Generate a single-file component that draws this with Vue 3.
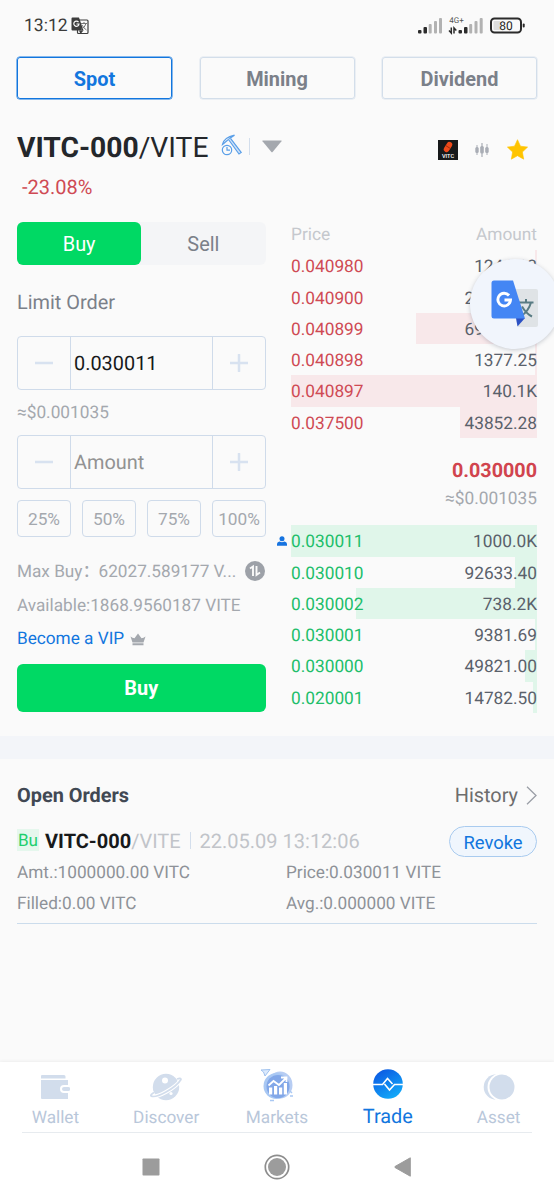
<script setup>
const tabs = ['Spot', 'Mining', 'Dividend']
const percents = ['25%', '50%', '75%', '100%']
const asks = [
  { price: '0.040980', amount: '1241.13', bar: 2 },
  { price: '0.040900', amount: '21500.00', bar: 0.5 },
  { price: '0.040899', amount: '69102.40', bar: 121.5 },
  { price: '0.040898', amount: '1377.25', bar: 2 },
  { price: '0.040897', amount: '140.1K', bar: 246 },
  { price: '0.037500', amount: '43852.28', bar: 77 },
]
const bids = [
  { price: '0.030011', amount: '1000.0K', bar: 246, mine: true },
  { price: '0.030010', amount: '92633.40', bar: 22.5 },
  { price: '0.030002', amount: '738.2K', bar: 181.5 },
  { price: '0.030001', amount: '9381.69', bar: 2 },
  { price: '0.030000', amount: '49821.00', bar: 12 },
  { price: '0.020001', amount: '14782.50', bar: 4 },
]
</script>

<template>
  <div class="screen">
    <header class="status">
      <span class="clock">13:12</span>
      <svg class="st-translate" width="18" height="18" viewBox="0 0 18 18">
        <rect x="6.5" y="3" width="10.5" height="13.5" rx="1" fill="none" stroke="#3d3d3d" stroke-width="1.2" />
        <path d="M1 .5h7l4.500 13H1.500Q.5 13.500.5 12.500V1.500Q.5.5 1.500.5z" fill="#3d3d3d" />
        <path d="M7.500 5.200A2.600 2.600 0 1 0 8 7H5.500" fill="none" stroke="#fafafa" stroke-width="1.200" />
        <path d="M10 6.500h6M13 5v1.500M15 6.500q-1 4-5 6M11 8q1.500 3 4.500 5" fill="none" stroke="#777" stroke-width="1" />
        <path d="M8 13.500h4.500L9.500 17z" fill="#3d3d3d" />
      </svg>
      <svg class="signals" width="110" height="20" viewBox="0 0 110 20">
        <g fill="#2b2b2b">
          <rect x="1" y="13" width="3.500" height="3.500" rx="1" /><rect x="6.500" y="10" width="3.500" height="6.500" rx="1" />
          <rect x="41.500" y="13" width="3.500" height="3.500" rx="1" /><rect x="47" y="10" width="3.500" height="6.500" rx="1" />
        </g>
        <g fill="#b2b2b2">
          <rect x="11.700" y="7" width="3" height="9.500" rx="1" /><rect x="17" y="4" width="3" height="12.500" rx="1" /><rect x="22" y="1" width="3" height="15.500" rx="1" />
          <rect x="52.200" y="7" width="3" height="9.500" rx="1" /><rect x="57.500" y="4" width="3" height="12.500" rx="1" /><rect x="62.700" y="1" width="3" height="15.500" rx="1" />
        </g>
        <path d="M34.300 10.500v5.500l-2.300-2.500M37 16.500v-5.500l2.300 2.500" stroke="#2b2b2b" stroke-width="1.500" fill="none" />
        <text x="32.300" y="5.800" font-size="8" fill="#555" font-family="Roboto, sans-serif">4G+</text>
        <rect x="74" y="1.500" width="30" height="14" rx="3.500" fill="#fafafa" stroke="#2b2b2b" stroke-width="2" />
        <rect x="76.500" y="4" width="7" height="9" rx="1" fill="#ddd" />
        <rect x="105.700" y="6.500" width="2" height="4" rx="1" fill="#2b2b2b" />
        <text x="89" y="13" font-size="12" text-anchor="middle" fill="#222" font-family="Roboto, sans-serif">80</text>
      </svg>
    </header>

    <nav class="tabs">
      <button v-for="(t, i) in tabs" :key="t" :class="['tab', { on: i === 0 }]">{{ t }}</button>
    </nav>

    <section class="pair">
      <h1><b>VITC-000</b><span>/VITE</span></h1>
      <svg class="pick" width="22" height="22" viewBox="0 0 22 22" fill="none" stroke="#5a9fe8" stroke-width="1.200">
        <path d="M1.500 10.500Q3 3.500 13.500 1.200Q8.500 4.300 6.800 6Q4.500 8 1.500 10.500z" />
        <path d="M7.500 5.500l10.500 14.500 2.200-1.600L9.500 4.300" fill="#cfe2f8" />
        <circle cx="6" cy="16" r="4.700" fill="#fafafa" /><path d="M6 13v3.200h3" />
      </svg>
      <i class="bar"></i>
      <svg class="caret" width="20" height="13" viewBox="0 0 20 13"><path d="M.8.5h18.400q.8 0 .3.700L10.600 11.900q-.6.700-1.200 0L.5 1.200Q0 .5.800.5z" fill="#a4a8ae" /></svg>
      <div class="actions">
        <svg width="20" height="20" viewBox="0 0 20 20">
          <rect width="20" height="20" fill="#17191a" />
          <g transform="rotate(32 10 7)"><rect x="7.200" y="1.500" width="5.600" height="11" rx="2.800" fill="#ee4a1a" /><path d="M7.200 7h5.600" stroke="#8e2508" stroke-width=".7" /></g>
          <text x="10" y="17.800" font-size="5.600" text-anchor="middle" fill="#fff" font-family="Roboto, sans-serif" font-weight="500">VITC</text>
        </svg>
        <svg width="14" height="16" viewBox="0 0 14 16" fill="#a9adb5">
          <path d="M1.500 3h1v10h-1zM6.400 1h1.200v14H6.400zM11.500 2h1v11h-1z" />
          <rect x=".3" y="5" width="3.400" height="6" rx="1.500" /><rect x="5.200" y="4" width="3.600" height="7.500" rx="1.500" /><rect x="10.200" y="5" width="3.500" height="6" rx="1.500" />
        </svg>
        <svg width="21" height="21" viewBox="0 0 21 21"><path d="M10.500.7l3 6.500 7.100.9-5.200 4.900 1.300 7.200-6.200-3.500-6.200 3.500L5.600 13 .4 8.100l7.100-.9z" fill="#ffc400" stroke="#ffc400" stroke-width=".6" stroke-linejoin="round" /></svg>
      </div>
    </section>
    <div class="change">-23.08%</div>

    <main class="trade">
      <section class="form">
        <div class="side"><button class="buy">Buy</button><button class="sell">Sell</button></div>
        <div class="kind">Limit Order</div>
        <div class="stepper">
          <span class="cell"><svg width="18" height="18" viewBox="0 0 18 18"><path d="M.5 9h17" /></svg></span>
          <span class="value">0.030011</span>
          <span class="cell"><svg width="18" height="18" viewBox="0 0 18 18"><path d="M.5 9h17M9 .7v16.600" /></svg></span>
        </div>
        <div class="approx">≈$0.001035</div>
        <div class="stepper">
          <span class="cell"><svg width="18" height="18" viewBox="0 0 18 18"><path d="M.5 9h17" /></svg></span>
          <span class="value hint">Amount</span>
          <span class="cell"><svg width="18" height="18" viewBox="0 0 18 18"><path d="M.5 9h17M9 .7v16.600" /></svg></span>
        </div>
        <div class="percents"><button v-for="p in percents" :key="p">{{ p }}</button></div>
        <div class="info max">
          <span class="mb">Max Buy<span class="colon">：</span></span><span class="num">62027.589177 V...</span>
          <svg width="20" height="20" viewBox="0 0 20 20"><circle cx="10" cy="10" r="10" fill="#9da1a8" /><path d="M5 7.500L8 5.500V15M11.500 5v9l3.500-2.500" fill="none" stroke="#fafafa" stroke-width="1.900" /></svg>
        </div>
        <div class="info avail">Available:1868.9560187 VITE</div>
        <div class="info vip">Become a VIP
          <svg width="16" height="13" viewBox="0 0 16 13" fill="#a4a8ae"><path d="M.5 3.500Q2.500 5 4.500 5.300L8 .5l3.500 4.800q2-.3 4-1.800-1 3-2 6h-11Q1.500 6.500.5 3.500zM2.500 10.300h11v1.900h-11z" /></svg>
        </div>
        <button class="submit">Buy</button>
      </section>

      <section class="book">
        <div class="head"><span>Price</span><span>Amount</span></div>
        <div v-for="r in asks" :key="r.price" class="row ask">
          <i class="depth" :style="{ width: r.bar + 'px' }"></i><span class="price">{{ r.price }}</span><span class="amt">{{ r.amount }}</span>
        </div>
        <div class="last">0.030000</div>
        <div class="last-usd">≈$0.001035</div>
        <div v-for="r in bids" :key="r.price" class="row bid">
          <i class="depth" :style="{ width: r.bar + 'px' }"></i>
          <svg v-if="r.mine" class="mine" width="10" height="10" viewBox="0 0 10 10" fill="#1673e0"><circle cx="5" cy="2.700" r="2.500" /><path d="M0 9.800V8q0-2 2.300-2.500L5 6.200l2.700-.7Q10 6 10 8v1.800z" /></svg>
          <span class="price">{{ r.price }}</span><span class="amt">{{ r.amount }}</span>
        </div>
      </section>
    </main>

    <div class="band"></div>

    <section class="orders">
      <div class="oh">
        <h2>Open Orders</h2>
        <span class="history">History</span>
        <svg width="11" height="19" viewBox="0 0 11 19"><path d="M1 .8l9 8.700-9 8.700" fill="none" stroke="#9a9ea6" stroke-width="1.300" /></svg>
      </div>
      <div class="ot">
        <span class="tag">Bu</span><b>VITC-000</b><span class="quote">/VITE</span><i></i><span class="time">22.05.09 13:12:06</span>
        <button>Revoke</button>
      </div>
      <div class="details"><span>Amt.:1000000.00 VITC</span><span>Price:0.030011 VITE</span><span>Filled:0.00 VITC</span><span>Avg.:0.000000 VITE</span></div>
    </section>

    <footer>
      <nav class="bottom">
        <div class="item">
          <svg width="30" height="28" viewBox="0 0 30 28" fill="#d2ddec"><path d="M1 3q0-1 1-1h22q1.500 0 1.500 1.500V5.500H1zM1 7h27v5h-4q-4 0-4 4t4 4h4v6H2q-1 0-1-1z" /><rect x="22" y="14" width="8.300" height="4" rx="2" /></svg>
          <span>Wallet</span>
        </div>
        <div class="item">
          <svg width="34" height="28" viewBox="0 0 34 28"><circle cx="17" cy="14" r="13.200" fill="#d2ddec" /><circle cx="16" cy="7.500" r="3" fill="#fff" /><circle cx="22" cy="20.500" r="1.600" fill="#fff" /><path d="M5 19.500q-4 2.500-3 3.500 4 2 15-4t15-12.500q0-2-4-.5" fill="none" stroke="#fff" stroke-width="4" /><path d="M5 19.500q-4 2.500-3 3.500 4 2 15-4t15-12.500q0-2-4-.5" fill="none" stroke="#d2ddec" stroke-width="1.700" /></svg>
          <span>Discover</span>
        </div>
        <div class="item">
          <svg class="mk" width="34" height="34" viewBox="0 0 34 34"><ellipse cx="20" cy="16" rx="12.500" ry="13.500" fill="#b7cdf3" /><circle cx="16.500" cy="17" r="13" fill="#a9c8f3" /><circle cx="18" cy="17.500" r="11.500" fill="#82a7e8" /><path d="M1 1l9-.5-5 6.500-1.500-4z" fill="#dceafd" stroke="#9fc1ee" /><path d="M9 18.500h3.200v7H9zM14 17h3.200v8.500H14zM19 18.500h3.200v7H19zM23.800 14H27v11.500h-3.200z" fill="#fff" /><path d="M8.500 16.500l5-4.500 5.500 4 7-7M21 8.500h5.500v4.500" fill="none" stroke="#fff" stroke-width="1.800" /><path d="M10 31.500h4M30 22l2 2M30 27h3" stroke="#a9c8f3" stroke-width="1.400" /></svg>
          <span>Markets</span>
        </div>
        <div class="item active">
          <svg width="30" height="30" viewBox="0 0 30 30"><defs><linearGradient id="tg" x1="0" y1="0" x2=".6" y2="1"><stop offset="0" stop-color="#0b50e0" /><stop offset="1" stop-color="#12a7f8" /></linearGradient></defs><circle cx="15" cy="15" r="14.800" fill="url(#tg)" /><path d="M0 15.500h9.500L14.500 9.500l5 5.500M11.500 15l5 6 5-5.500H30" fill="none" stroke="#fff" stroke-width="1.600" /></svg>
          <span>Trade</span>
        </div>
        <div class="item">
          <svg width="32" height="28" viewBox="0 0 32 28" fill="#d2ddec"><circle cx="13.500" cy="14" r="12.800" /><circle cx="18.800" cy="14" r="14.300" fill="#fff" /><circle cx="19" cy="14" r="12.500" /></svg>
          <span>Asset</span>
        </div>
      </nav>
      <div class="system">
        <svg width="18" height="18" viewBox="0 0 18 18"><rect x=".5" y=".5" width="17" height="17" rx=".8" fill="#9c9c9c" /></svg>
        <svg width="26" height="26" viewBox="0 0 26 26"><circle cx="13" cy="13" r="11.700" fill="none" stroke="#8d8d8d" stroke-width="1.700" /><circle cx="13" cy="13" r="9" fill="#9c9c9c" /></svg>
        <svg width="18" height="20" viewBox="0 0 18 20"><path d="M16.300.8v18.400L1 10.500q-.8-.5 0-1z" fill="#9c9c9c" stroke="#9c9c9c" stroke-linejoin="round" /></svg>
      </div>
    </footer>

    <div class="bubble">
      <svg width="48" height="48" viewBox="0 0 48 48">
        <path d="M18 9h27q2 0 2 2v34q0 2-2 2H27z" fill="#dfe3e6" />
        <path d="M27 22.500h15.500M35 19v3.500M40 22.500q-2.500 9-10.500 14M31 26.500q4 7 10 10" fill="none" stroke="#587b83" stroke-width="2" />
        <path d="M25 38h9l-7.500 8.500z" fill="#2c51c4" />
        <path d="M3 .5h19L34 38.500H3q-2.500 0-2.500-2.500V3Q.5.500 3 .5z" fill="#4486f4" />
        <path d="M18 15.500A6.300 6.300 0 1 0 19.500 20H13.500" fill="none" stroke="#fff" stroke-width="2.900" />
      </svg>
    </div>
  </div>
</template>

<style scoped>
* { box-sizing: border-box; }
.screen { position: relative; width: 554px; height: 1200px; background: #fafafa; font-family: Roboto, "Noto Sans CJK SC", sans-serif; text-rendering: geometricPrecision; color: #24272b; overflow: hidden; display: flex; flex-direction: column; }
svg { display: block; flex: none; }
button { font: inherit; color: inherit; background: none; border: 0; padding: 0; margin: 0; }
.status { height: 57px; padding: 16px 27px 0 24px; display: flex; align-items: flex-start; }
.clock { font-size: 17.500px; line-height: 20px; width: 44px; color: #3b3b3b; }
.st-translate { margin: 1px 0 0 3px; }
.signals { margin: 1px 0 0 auto; overflow: visible; }
.tabs { display: flex; justify-content: space-between; padding: 0 17px; height: 42px; }
.tab { width: 155px; height: 42px; border: 1px solid #d3deea; box-shadow: 0 0 0 .5px #dbe3ee; border-radius: 3px; font-size: 19.900px; line-height: 44px; font-weight: 700; color: #7b8089; }
.tab.on { border-color: #1276de; box-shadow: 0 0 0 .5px #1276de; color: #1276de; }
.pair { height: 72px; padding: 30px 26px 0 17px; display: flex; align-items: flex-start; }
h1 { margin: 0; font-size: 28.250px; line-height: 38px; font-weight: 400; white-space: nowrap; width: 204px; }
h1 b { font-weight: 700; }
.pick { margin-top: 5px; }
.bar { width: 1px; height: 17px; background: #d3deec; margin: 9px 0 0 6px; }
.caret { margin: 11px 0 0 12px; }
.actions { margin: 10px 0 0 auto; display: flex; align-items: center; }
.actions svg:nth-child(2) { margin: 0 18px 0 17px; }
.change { height: 51px; padding-left: 22px; line-height: 33px; font-size: 20px; color: #cf4a54; }
.trade { height: 514px; display: flex; justify-content: space-between; padding: 0 17px; }
.form { width: 248.500px; }
.side { display: flex; height: 42.500px; border-radius: 6px; background: #f4f5f7; font-size: 19.900px; line-height: 45px; }
.side button { flex: 1; }
.side .buy { background: #00d964; color: #fff; border-radius: 6px; }
.side .sell { color: #7b8089; }
.kind { margin-top: 24px; height: 47px; line-height: 27px; font-size: 19.900px; color: #7b8089; }
.stepper { display: flex; height: 54px; border: 1px solid #cfdbea; border-radius: 4px; }
.cell { width: 52px; display: grid; place-items: center; }
.cell svg { stroke: #d8e2f0; stroke-width: 2.500px; stroke-linecap: round; fill: none; }
.value { flex: 1; border: solid #cfdbea; border-width: 0 1px; padding-left: 3px; font-size: 19.900px; line-height: 54px; color: #17191b; }
.value.hint { color: #929292; }
.approx { font-size: 17.250px; line-height: 45px; height: 45px; color: #a4a8ae; padding-top: 1px; }
.percents { margin-top: 11px; display: grid; grid-template-columns: repeat(4, 54px); gap: 11px; }
.percents button { height: 37px; border: 1px solid #cfdbea; border-radius: 4px; font-size: 17.250px; line-height: 36px; color: #a4a8ae; }
.info { font-size: 17.200px; color: #a4a8ae; display: flex; white-space: nowrap; line-height: 34px; }
.max { margin-top: 18px; height: 34px; align-items: center; }
.mb { width: 81.500px; display: flex; }
.colon { width: 17px; }
.max svg { margin: -2px 1px 0 auto; }
.vip { color: #1276de; align-items: center; gap: 6px; height: 33px; line-height: 35px; }
.submit { display: block; width: 248.500px; height: 48.500px; margin-top: 8px; background: #00d964; border-radius: 6px; color: #fff; font-weight: 700; font-size: 19.900px; line-height: 50px; }
.book { width: 246px; font-size: 17.300px; }
.head { display: flex; justify-content: space-between; height: 28.300px; line-height: 26px; color: #c5c8cd; }
.row { position: relative; display: flex; justify-content: space-between; height: 31.270px; line-height: 35px; }
.row span { position: relative; }
.depth { position: absolute; right: 0; top: 0; bottom: 0; }
.ask .depth { background: #f8e8ea; }
.bid .depth { background: #e0f6ea; }
.ask .price { color: #cf4a54; }
.bid .price { color: #21be6a; }
.amt { color: #5a616b; }
.mine { position: absolute; left: -14px; top: 11px; }
.last { margin-top: 20px; height: 25px; line-height: 25px; text-align: right; font-weight: 700; font-size: 19.750px; color: #d1444e; }
.last-usd { height: 42.500px; line-height: 32px; text-align: right; color: #a4a8ae; }
.band { height: 22.500px; background: #f3f5f9; flex: none; }
.orders { padding: 0 17px; height: 303.500px; flex: none; }
.oh { display: flex; align-items: center; padding-top: 21px; height: 53px; }
h2 { margin: 0 auto 0 0; font-size: 19.900px; font-weight: 700; color: #414853; }
.history { font-size: 19.900px; color: #6d6d6d; margin-right: 8px; }
.ot { display: flex; align-items: center; height: 48px; padding-top: 10px; font-size: 20px; white-space: nowrap; }
.ot b { margin-left: 6px; color: #17191b; }
.tag { font-size: 17.100px; color: #21cf6d; background: #e5f7ed; width: 22px; height: 22px; line-height: 24px; text-align: center; margin-top: -1px; }
.quote, .time { color: #c1c4c9; }
.ot i { width: 1px; height: 17px; background: #d3deec; margin: 0 9px 0 9px; }
.ot button { margin: 1px 0 0 auto; width: 88px; height: 31px; border: 1px solid #a9cbef; border-radius: 16px; background: #f0f6fd; color: #1276de; font-size: 18.400px; line-height: 31px; }
.details { display: grid; grid-template-columns: 269px 1fr; grid-auto-rows: 31px; line-height: 26px; height: 64px; border-bottom: 1px solid #cbdcec; font-size: 17.200px; color: #8e9298; }
footer { height: 138px; background: #fff; flex: none; box-shadow: 0 -1px 3px rgba(0,0,0,.05); }
.bottom { display: grid; grid-template-columns: repeat(5, 1fr); height: 71px; position: relative; }
.bottom::after { content: ""; position: absolute; bottom: 0; left: 22px; right: 22px; height: 1px; background: #e7ebef; }
.item { display: flex; flex-direction: column; align-items: center; justify-content: space-between; height: 67px; padding-top: 11px; font-size: 17.200px; line-height: 24px; color: #b9c7da; }
.item span { line-height: 22px; }
.item svg.mk { margin-top: -4px; }
.item.active { padding-top: 6.500px; color: #1276de; font-size: 19.900px; }
.item.active span { line-height: 24px; }
.system { height: 67px; display: grid; grid-template-columns: repeat(3, 126px); justify-content: center; place-items: center; }
.bubble { position: absolute; left: 470px; top: 259px; width: 90px; height: 90px; border-radius: 50%; background: #f1f5fc; box-shadow: 0 1px 4px rgba(70,80,100,.28); display: grid; place-items: center; }
</style>

<style>
html, body { margin: 0; background: #fafafa; }
</style>
